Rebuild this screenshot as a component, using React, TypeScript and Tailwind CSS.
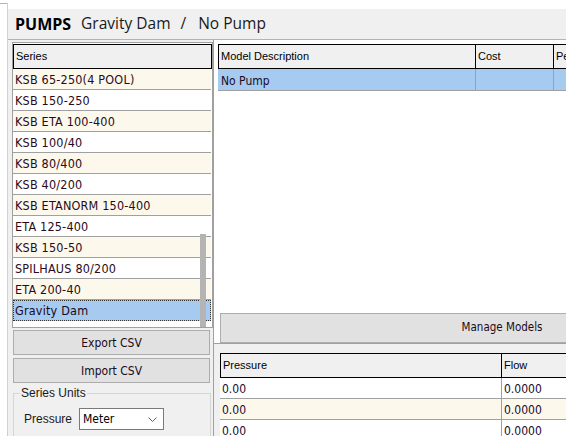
import React from "react";

const series = [
  "KSB 65-250(4 POOL)",
  "KSB 150-250",
  "KSB ETA 100-400",
  "KSB 100/40",
  "KSB 80/400",
  "KSB 40/200",
  "KSB ETANORM 150-400",
  "ETA 125-400",
  "KSB 150-50",
  "SPILHAUS 80/200",
  "ETA 200-40",
  "Gravity Dam",
];

const points = [
  { pressure: "0.00", flow: "0.0000" },
  { pressure: "0.00", flow: "0.0000" },
  { pressure: "0.00", flow: "0.0000" },
];

const selectedSeries = "Gravity Dam";

export default function App() {
  return (
    <div className="w-[566px] h-[436px] overflow-hidden bg-white font-['Liberation_Sans',Arial,sans-serif] text-[12px] text-black">
      <div className="flex h-full pt-[3px]">
        <div className="w-[7px] shrink-0 self-start border-t border-[#b4b4b4]" />
        <div className="flex flex-1 min-w-0 flex-col border-l border-[#d0d0d0]">
          <div className="h-[6px] shrink-0 bg-white" />

          {/* title */}
          <div className="flex h-[31px] shrink-0 items-center border-b border-[#b4b4b4] bg-[#f0f0f0] pl-[7px] font-['Open_Sans',sans-serif] text-[15.5px] text-[#1a1a1a]">
            <span className="text-[16px] font-bold text-black">PUMPS</span>
            <span className="ml-[10px]">Gravity Dam</span>
            <span className="ml-[10px]">/</span>
            <span className="ml-[12px]">No Pump</span>
          </div>

          <div className="flex min-h-0 flex-1 bg-[#f0f0f0]">
            {/* left side */}
            <div className="flex w-[205px] shrink-0 flex-col pl-[4px] pt-[2px]">
              <div className="relative h-[286px] w-[201px] shrink-0 overflow-hidden border border-[#a0a0a0] bg-white pt-[1px]">
                <div className="flex h-[25px] w-[199px] items-center border border-black bg-[#f0f0f0] pl-[2px] text-[11px]">
                  Series
                </div>
                {series.map((name, i) => {
                  const selected = name === selectedSeries;
                  return (
                    <div
                      key={name}
                      className={
                        selected
                          ? "flex h-[21px] w-[198px] items-center border border-dotted border-[#333] bg-[#a6caf0] pl-[1px] pt-[2px] font-['DejaVu_Sans',sans-serif] font-stretch-condensed text-[12.5px] tracking-[0.2px] text-[#1a0a20]"
                          : i % 2 === 0
                          ? "flex h-[21px] w-[198px] items-center border-b border-[#a0a0a0] bg-[#fdf8ec] pl-[2px] pt-[2px] font-['DejaVu_Sans',sans-serif] font-stretch-condensed text-[12.5px] tracking-[0.2px] text-[#2a0a1a]"
                          : "flex h-[21px] w-[198px] items-center border-b border-[#a0a0a0] bg-white pl-[2px] pt-[2px] font-['DejaVu_Sans',sans-serif] font-stretch-condensed text-[12.5px] tracking-[0.2px] text-[#2a0a1a]"
                      }
                    >
                      {name}
                    </div>
                  );
                })}
                <div className="absolute left-[187px] top-[191px] h-[94px] w-[6px] bg-[#b4b4b4]" />
              </div>

              <button className="ml-[1px] mt-[2px] h-[25px] w-[197px] shrink-0 border border-[#adadad] bg-[#e1e1e1] font-['DejaVu_Sans',sans-serif] font-stretch-condensed text-[12px] text-[#1a0a1a]">
                Export CSV
              </button>
              <button className="ml-[1px] mt-[3px] h-[25px] w-[197px] shrink-0 border border-[#adadad] bg-[#e1e1e1] font-['DejaVu_Sans',sans-serif] font-stretch-condensed text-[12px] text-[#1a0a1a]">
                Import CSV
              </button>

              <fieldset className="ml-[1px] mt-[1px] w-[198px] border border-[#d5d5d5] pb-[10px]">
                <legend className="ml-[6px] px-[1px] text-[12px] text-[#1a1a1a]">Series Units</legend>
                <div className="mt-[6px] flex items-center pl-[10px]">
                  <span className="text-[12px] text-[#1a1a1a]">Pressure</span>
                  <div className="ml-[7px] flex h-[22px] w-[85px] items-center justify-between border border-[#7a7a7a] bg-white pl-[3px] pr-[6px] font-['DejaVu_Sans',sans-serif] font-stretch-condensed text-[12px]">
                    <span>Meter</span>
                    <svg width="9" height="5" viewBox="0 0 9 5" fill="none">
                      <path d="M0.5 0.5 L4.5 4.5 L8.5 0.5" stroke="#606060" strokeWidth="1" />
                    </svg>
                  </div>
                </div>
              </fieldset>
            </div>

            {/* right side */}
            <div className="flex min-w-0 flex-1 flex-col border-l border-[#a0a0a0]">
              <div className="flex h-[304px] shrink-0 flex-col border-b border-[#a0a0a0] bg-white pl-[4px] pt-[4px]">
                <div className="flex h-[25px] w-max border-y border-l border-black bg-[#f0f0f0] text-[11px]">
                  <div className="flex w-[257px] items-center border-r border-black pl-[2px]">Model Description</div>
                  <div className="flex w-[78px] items-center border-r border-black pl-[2px]">Cost</div>
                  <div className="flex w-[200px] items-center border-r border-black pl-[2px]">Performance</div>
                </div>
                <div className="flex h-[22px] w-max border-b border-[#a0a0a0] bg-[#a6caf0] font-['DejaVu_Sans',sans-serif] font-stretch-condensed text-[12px] text-[#1a0a20]">
                  <div className="flex w-[258px] items-center border-r border-[#a0a0a0] pl-[3px] pt-[2px]">No Pump</div>
                  <div className="w-[78px] border-r border-[#a0a0a0]" />
                  <div className="w-[200px]" />
                </div>
                <div className="flex-1" />
                <button className="ml-[2px] h-[30px] w-[564px] shrink-0 border border-[#adadad] bg-[#e1e1e1] font-['DejaVu_Sans',sans-serif] font-stretch-condensed text-[11.5px] text-[#1a0a1a]">
                  Manage Models
                </button>
              </div>

              <div className="pl-[6px] pt-[9px]">
                <div className="w-max bg-white">
                  <div className="flex h-[25px] border border-black bg-[#f0f0f0] text-[11px]">
                    <div className="flex w-[281px] items-center border-r border-black pl-[2px]">Pressure</div>
                    <div className="flex w-[200px] items-center pl-[2px]">Flow</div>
                  </div>
                  {points.map((p, i) => (
                    <div
                      key={i}
                      className={
                        i % 2 === 1
                          ? "flex h-[21px] border-b border-[#a0a0a0] bg-[#fdf8ec] font-['DejaVu_Sans',sans-serif] font-stretch-condensed text-[12px] text-[#1a0a30]"
                          : "flex h-[21px] border-b border-[#a0a0a0] bg-white font-['DejaVu_Sans',sans-serif] font-stretch-condensed text-[12px] text-[#1a0a30]"
                      }
                    >
                      <div className="flex w-[282px] items-center border-r border-[#a0a0a0] pl-[2px] pt-[2px]">{p.pressure}</div>
                      <div className="flex w-[200px] items-center pl-[2px] pt-[2px]">{p.flow}</div>
                    </div>
                  ))}
                </div>
              </div>
            </div>
          </div>
        </div>
      </div>
    </div>
  );
}
